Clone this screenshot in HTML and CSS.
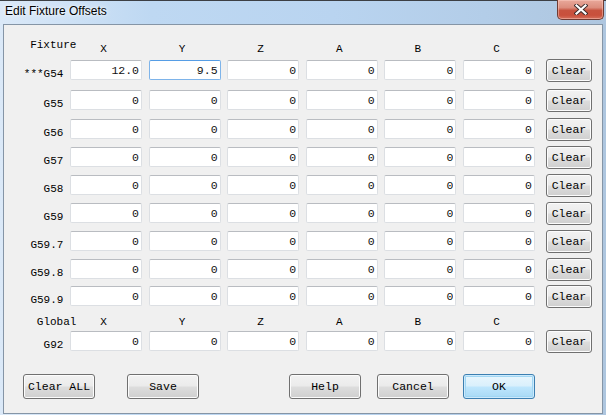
FILE: index.html
```html
<!DOCTYPE html>
<html>
<head>
<meta charset="utf-8">
<title>Edit Fixture Offsets</title>
<link rel="stylesheet" href="styles.css">
</head>
<body>
<div class="window">
  <div class="titlebar">
    <span class="title">Edit Fixture Offsets</span>
    <button class="close" aria-label="Close">
      <svg width="14" height="11" viewBox="0 0 14 11">
        <path d="M2.5 1.5 L11.5 9.5 M11.5 1.5 L2.5 9.5" stroke="#3a2a2a" stroke-width="4" stroke-linecap="square"/>
        <path d="M2.5 1.5 L11.5 9.5 M11.5 1.5 L2.5 9.5" stroke="#ffffff" stroke-width="2.2" stroke-linecap="square"/>
      </svg>
    </button>
  </div>
  <div class="client">
    <div class="grid">
      <div class="hdr h1 fix">Fixture</div>
      <div class="hdr h1 col">X</div>
      <div class="hdr h1 col">Y</div>
      <div class="hdr h1 col">Z</div>
      <div class="hdr h1 col">A</div>
      <div class="hdr h1 col">B</div>
      <div class="hdr h1 col">C</div>
      <div></div>

      <div class="lbl">***G54</div>
      <input class="fld" value="12.0"><input class="fld focus" value="9.5"><input class="fld" value="0"><input class="fld" value="0"><input class="fld" value="0"><input class="fld" value="0">
      <button class="btn clr">Clear</button>

      <div class="lbl">G55</div>
      <input class="fld" value="0"><input class="fld" value="0"><input class="fld" value="0"><input class="fld" value="0"><input class="fld" value="0"><input class="fld" value="0">
      <button class="btn clr">Clear</button>

      <div class="lbl">G56</div>
      <input class="fld" value="0"><input class="fld" value="0"><input class="fld" value="0"><input class="fld" value="0"><input class="fld" value="0"><input class="fld" value="0">
      <button class="btn clr">Clear</button>

      <div class="lbl">G57</div>
      <input class="fld" value="0"><input class="fld" value="0"><input class="fld" value="0"><input class="fld" value="0"><input class="fld" value="0"><input class="fld" value="0">
      <button class="btn clr">Clear</button>

      <div class="lbl">G58</div>
      <input class="fld" value="0"><input class="fld" value="0"><input class="fld" value="0"><input class="fld" value="0"><input class="fld" value="0"><input class="fld" value="0">
      <button class="btn clr">Clear</button>

      <div class="lbl">G59</div>
      <input class="fld" value="0"><input class="fld" value="0"><input class="fld" value="0"><input class="fld" value="0"><input class="fld" value="0"><input class="fld" value="0">
      <button class="btn clr">Clear</button>

      <div class="lbl">G59.7</div>
      <input class="fld" value="0"><input class="fld" value="0"><input class="fld" value="0"><input class="fld" value="0"><input class="fld" value="0"><input class="fld" value="0">
      <button class="btn clr">Clear</button>

      <div class="lbl">G59.8</div>
      <input class="fld" value="0"><input class="fld" value="0"><input class="fld" value="0"><input class="fld" value="0"><input class="fld" value="0"><input class="fld" value="0">
      <button class="btn clr">Clear</button>

      <div class="lbl">G59.9</div>
      <input class="fld" value="0"><input class="fld" value="0"><input class="fld" value="0"><input class="fld" value="0"><input class="fld" value="0"><input class="fld" value="0">
      <button class="btn clr">Clear</button>

      <div class="hdr h2 fix">Global</div>
      <div class="hdr h2 col">X</div>
      <div class="hdr h2 col">Y</div>
      <div class="hdr h2 col">Z</div>
      <div class="hdr h2 col">A</div>
      <div class="hdr h2 col">B</div>
      <div class="hdr h2 col">C</div>
      <div></div>

      <div class="lbl">G92</div>
      <input class="fld" value="0"><input class="fld" value="0"><input class="fld" value="0"><input class="fld" value="0"><input class="fld" value="0"><input class="fld" value="0">
      <button class="btn clr">Clear</button>
    </div>
    <div class="actions">
      <button class="btn act">Clear ALL</button>
      <button class="btn act save">Save</button>
      <button class="btn act help">Help</button>
      <button class="btn act cancel">Cancel</button>
      <button class="btn act ok">OK</button>
    </div>
  </div>
</div>
</body>
</html>
```
FILE: styles.css
```css
html, body {
  margin: 0;
  padding: 0;
  background: #b9d3ee;
}

.window {
  width: 606px;
  height: 415px;
  box-sizing: border-box;
  display: flex;
  flex-direction: column;
  border-top: 1px solid #3c3f44;
  padding: 0 3px 1px 3px;
  background: linear-gradient(to right, #dbe9f8 0%, #bed8f2 25%, #b9d4f0 55%, #b3cde8 80%, #aec6df 100%);
}

.titlebar {
  height: 23px;
  display: flex;
  align-items: flex-start;
  flex: none;
}

.title {
  font-family: "Segoe UI", "Liberation Sans", Arial, sans-serif;
  font-size: 12px;
  line-height: 21px;
  padding-left: 2px;
  color: #000;
  text-shadow: 0 0 6px rgba(255, 255, 255, 0.9), 0 0 3px rgba(255, 255, 255, 0.9);
}

.close {
  margin-left: auto;
  margin-right: -1px;
  margin-top: -1px;
  width: 47px;
  height: 20px;
  padding: 0;
  border: 1px solid #6f3b33;
  border-top: none;
  border-radius: 0 0 5px 5px;
  background: linear-gradient(to bottom, #e9a99b 0%, #dc8d7d 40%, #c7533f 55%, #c8503c 80%, #d4705c 100%);
  box-shadow: inset 0 0 0 1px rgba(255, 210, 200, 0.45);
  display: flex;
  align-items: center;
  justify-content: center;
}

.client {
  flex: 1;
  background: #f0f0f0;
  border: 1px solid #8595a6;
  padding: 11px 0 0 0;
}

.grid {
  display: grid;
  grid-template-columns: 59.4px repeat(6, 72px) 46px;
  grid-template-rows: 24px 30px 29px 28px 28px 28px 28px 28px 27px 20px 25px 20px;
  column-gap: 6.6px;
  font-family: "Liberation Mono", "Courier New", monospace;
  font-size: 11px;
  color: #000;
}

.hdr {
  line-height: 14px;
  white-space: nowrap;
}

.h1.fix { padding-top: 2px; }
.h1.col { padding-top: 6px; }
.h2 { padding-top: 9px; }

.fix {
  text-align: right;
  margin-right: -13px;
}

.col {
  text-align: center;
  margin-left: -5px;
}

.lbl {
  text-align: right;
  line-height: 14px;
  padding-top: 7px;
  align-self: start;
}

.fld {
  align-self: start;
  width: 72px;
  height: 20px;
  box-sizing: border-box;
  margin: 0;
  padding: 1px 2px 0 0;
  border: 1px solid #dcdfe3;
  border-top-color: #b9bcc1;
  border-radius: 2px;
  background: #fff;
  font-family: "Liberation Mono", "Courier New", monospace;
  font-size: 11.5px;
  color: #111;
  text-align: right;
  outline: none;
}

.fld.focus {
  border-color: #7eb4ea;
  border-top-color: #569de5;
}

.btn {
  box-sizing: border-box;
  margin: 0;
  padding: 0;
  border: 1px solid #707070;
  border-radius: 3px;
  background: linear-gradient(to bottom, #f2f2f2 0%, #ebebeb 48%, #dddddd 52%, #cfcfcf 100%);
  box-shadow: inset 0 0 0 1px #fcfcfc;
  font-family: "Liberation Mono", "Courier New", monospace;
  font-size: 11.5px;
  color: #000;
}

.clr {
  align-self: start;
  width: 46px;
  height: 23px;
  margin-top: -1px;
  margin-left: 4.4px;
}

.actions {
  display: flex;
  margin-top: 23px;
  padding-left: 19px;
}

.act {
  width: 72px;
  height: 25px;
}

.save { margin-left: 32px; }
.help { margin-left: 90px; }
.cancel { margin-left: 16px; }
.ok {
  margin-left: 14px;
  border-color: #3c7fb1;
  background: linear-gradient(to bottom, #eaf6fd 0%, #d9f0fc 48%, #bee6fd 52%, #a7d9f5 100%);
  box-shadow: inset 0 0 0 1px #cdeafc, inset 0 0 0 2px #a0d6f3;
}
```
